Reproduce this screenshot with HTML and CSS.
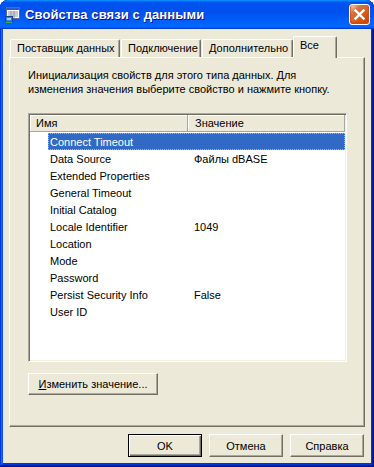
FILE: index.html
```html
<!DOCTYPE html>
<html lang="ru">
<head>
    <meta charset="UTF-8">
    <meta name="viewport" content="width=device-width, initial-scale=1.0">
    <title>Свойства связи с данными</title>
    <link rel="stylesheet" href="styles.css">
</head>
<body>
    <div class="window">
        <div class="titlebar">
            <svg class="app-icon" width="16" height="16" viewBox="0 0 16 16">
                <rect x="1.5" y="0.5" width="13" height="11" fill="#fff" stroke="#5a6b8c"/>
                <rect x="2" y="1" width="12" height="2" fill="#2a5bc8"/>
                <path d="M3 5h10M3 7h10M3 9h10M6 4v7M9 4v7" stroke="#8d96a8" stroke-width="1"/>
                <rect x="0.5" y="9.5" width="7" height="5" fill="#3d7bf0" stroke="#1c3f8a"/>
                <rect x="2" y="11" width="4" height="2" fill="#9fd0ff"/>
                <rect x="1" y="14.5" width="6" height="1.5" fill="#3fae3a"/>
            </svg>
            <span class="title">Свойства связи с данными</span>
            <button class="close-btn" aria-label="Закрыть">
                <svg width="13" height="13" viewBox="0 0 13 13">
                    <path d="M2.5 2.5l8 8M10.5 2.5l-8 8" stroke="#fff" stroke-width="2.4" stroke-linecap="square"/>
                </svg>
            </button>
        </div>

        <div class="client">
            <!-- вкладки -->
            <div class="tabs">
                <div class="tab tab-provider">Поставщик данных</div>
                <div class="tab tab-connection">Подключение</div>
                <div class="tab tab-advanced">Дополнительно</div>
                <div class="tab tab-all active">Все</div>
            </div>

            <div class="panel">
                <p class="intro">Инициализация свойств для этого типа данных. Для<br>изменения значения выберите свойство и нажмите кнопку.</p>

                <div class="listbox">
                    <div class="list-header">
                        <div class="hcol hcol-name">Имя</div>
                        <div class="hcol hcol-value">Значение</div>
                    </div>
                    <div class="rows">
                        <div class="row selected"><span class="cell-name">Connect Timeout</span><span class="cell-value"></span></div>
                        <div class="row"><span class="cell-name">Data Source</span><span class="cell-value">Файлы dBASE</span></div>
                        <div class="row"><span class="cell-name">Extended Properties</span><span class="cell-value"></span></div>
                        <div class="row"><span class="cell-name">General Timeout</span><span class="cell-value"></span></div>
                        <div class="row"><span class="cell-name">Initial Catalog</span><span class="cell-value"></span></div>
                        <div class="row"><span class="cell-name">Locale Identifier</span><span class="cell-value">1049</span></div>
                        <div class="row"><span class="cell-name">Location</span><span class="cell-value"></span></div>
                        <div class="row"><span class="cell-name">Mode</span><span class="cell-value"></span></div>
                        <div class="row"><span class="cell-name">Password</span><span class="cell-value"></span></div>
                        <div class="row"><span class="cell-name">Persist Security Info</span><span class="cell-value">False</span></div>
                        <div class="row"><span class="cell-name">User ID</span><span class="cell-value"></span></div>
                    </div>
                </div>

                <button class="btn btn-edit"><u>И</u>зменить значение...</button>
            </div>

            <div class="footer">
                <button class="btn btn-default">OK</button>
                <button class="btn">Отмена</button>
                <button class="btn">Справка</button>
            </div>
        </div>
    </div>
</body>
</html>
```

FILE: styles.css
```css
/* Сброс */
* {
    margin: 0;
    padding: 0;
    box-sizing: border-box;
}

body {
    font-family: 'Liberation Sans', Arial, sans-serif;
    font-size: 11px;
    color: #000;
    background: #fff;
}

.window {
    width: 374px;
    height: 467px;
    display: flex;
    flex-direction: column;
    background: #0831d9;
    border-radius: 8px 8px 0 0;
    box-shadow: inset -1px -1px #00138c, inset 1px 1px #0831d9,
                inset -2px -2px #001ea0, inset 2px 2px #166aee,
                inset -3px -3px #003bda, inset 3px 3px #0855dd;
    overflow: hidden;
}

/* Заголовок окна */
.titlebar {
    height: 29px;
    display: flex;
    align-items: center;
    padding: 0 4px 0 5px;
    background: linear-gradient(180deg, #0997ff, #0053ee 8%, #0050ee 40%, #0066ff 88%, #0066ff 93%, #005bff 95%, #003dd7 96%, #003dd7);
    border-radius: 8px 8px 0 0;
}

.app-icon {
    flex: none;
    margin-right: 4px;
}

.title {
    flex: 1;
    color: #fff;
    font-weight: bold;
    font-size: 13px;
    letter-spacing: 0.1px;
    text-shadow: 1px 1px #0f1089;
}

.close-btn {
    width: 21px;
    height: 21px;
    display: flex;
    align-items: center;
    justify-content: center;
    border: 1px solid #fff;
    border-radius: 3px;
    background: radial-gradient(circle at 90% 90%, #cc4600 0%, #dc6527 55%, #cd7546 70%, #ffccb2 90%, #fff 100%);
    box-shadow: inset 0 -1px 2px 1px #da4600;
}

/* Клиентская область */
.client {
    flex: 1;
    margin: 0 3px 4px;
    background: #ece9d8;
    padding: 7px 6px 0;
    display: flex;
    flex-direction: column;
}

.tabs {
    display: flex;
    align-items: flex-end;
    padding-left: 1px;
    height: 21px;
    position: relative;
    z-index: 1;
}

.tab {
    height: 18px;
    padding: 2px 0 0 6px;
    margin-right: 1px;
    background: #ece9d8;
    border-top: 1px solid #fff;
    border-left: 1px solid #fff;
    border-right: 1px solid #716f64;
    box-shadow: inset -1px 0 #aca899;
    border-radius: 2px 2px 0 0;
    white-space: nowrap;
    overflow: hidden;
}

.tab-provider {
    width: 110px;
}

.tab-connection {
    width: 80px;
}

.tab-advanced {
    width: 91px;
    margin-right: 0;
}

.tab-all {
    width: 44px;
}

.tab.active {
    height: 22px;
    margin-bottom: -1px;
    padding-top: 2px;
    line-height: 13px;
}

.panel {
    height: 370px;
    background: #ece9d8;
    border-top: 1px solid #fff;
    border-left: 1px solid #fff;
    border-right: 1px solid #716f64;
    border-bottom: 1px solid #716f64;
    box-shadow: inset -1px -1px #aca899;
    padding: 10px 0 0 18px;
}

.intro {
    line-height: 14px;
    margin-bottom: 17px;
}

/* Список свойств */
.listbox {
    width: 319px;
    height: 249px;
    background: #fff;
    border: 1px solid;
    border-color: #aca899 #fff #fff #aca899;
    box-shadow: inset 1px 1px #716f64, inset -1px -1px #f1efe2;
    padding: 1px;
}

.list-header {
    display: flex;
    height: 17px;
    background: #ece9d8;
}

.hcol {
    padding: 2px 0 0 6px;
    border-right: 1px solid #aca899;
    border-bottom: 1px solid #aca899;
    box-shadow: inset 1px 1px #fff;
}

.hcol-name {
    width: 158px;
}

.hcol-value {
    flex: 1;
    padding-left: 7px;
}

.rows {
    padding: 1px 0 0 18px;
}

.row {
    display: flex;
    height: 17px;
    align-items: center;
}

.row.selected {
    background: #316ac5;
    color: #fff;
    outline: 1px dotted #e0b060;
    outline-offset: -1px;
}

.cell-name {
    width: 139px;
    padding-left: 2px;
    white-space: nowrap;
}

.cell-value {
    padding-left: 7px;
}

/* Кнопки */
.btn {
    font-family: inherit;
    font-size: 11px;
    color: #000;
    height: 23px;
    width: 74px;
    background: #ece9d8;
    border: 1px solid;
    border-color: #fff #716f64 #716f64 #fff;
    box-shadow: inset -1px -1px #aca899;
}

.btn u {
    text-decoration: underline;
}

.btn-edit {
    width: 130px;
    height: 22px;
    margin-top: 11px;
}

.btn-default {
    border: 1px solid #000;
    box-shadow: inset 1px 1px #fff, inset -1px -1px #716f64, inset -2px -2px #aca899;
}

.footer {
    display: flex;
    justify-content: flex-end;
    gap: 7px;
    padding: 7px 1px 0 0;
}
```
